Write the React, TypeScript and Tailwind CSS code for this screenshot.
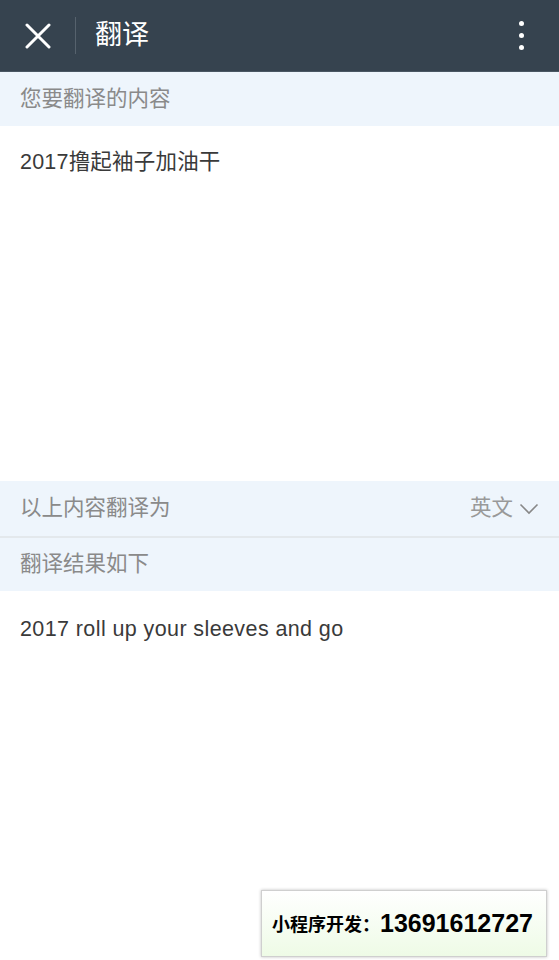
import React from "react";

const font = '"Liberation Sans", "Noto Sans CJK SC", sans-serif';

export default function App() {
  return (
    <div
      className="relative w-[559px] h-[960px] bg-white overflow-hidden"
      style={{ fontFamily: font }}
    >
      <header className="h-[72px] bg-[#36434f] border-b border-[#4a5763] flex items-center">
        <div className="w-[75px] flex items-center justify-center pl-[1px]">
          <svg width="26" height="26" viewBox="0 0 26 26">
            <path d="M2 2 L24 24 M24 2 L2 24" stroke="#fff" strokeWidth="3" strokeLinecap="round" />
          </svg>
        </div>
        <div className="w-px h-[37px] bg-[#56626d]" />
        <div className="pl-[19px] text-white text-[27px] leading-none flex-1">翻译</div>
        <div className="w-[48px] flex flex-col items-center gap-[7px] mr-[14px]">
          <span className="w-[5px] h-[5px] rounded-full bg-white" />
          <span className="w-[5px] h-[5px] rounded-full bg-white" />
          <span className="w-[5px] h-[5px] rounded-full bg-white" />
        </div>
      </header>
      <div className="h-[54px] bg-[#eef5fc] flex items-center px-[20px] text-[21.5px] text-[#8a8a8a]">
        您要翻译的内容
      </div>
      <div className="h-[355px] px-[20px]">
        <div className="pt-[22px] text-[21.5px] tracking-[0.2px] leading-[28px] text-[#3a3a3a]">2017撸起袖子加油干</div>
      </div>
      <div className="h-[55px] bg-[#eef5fc] flex items-center px-[20px] text-[21.5px] text-[#8a8a8a]">
        <span className="flex-1">以上内容翻译为</span>
        <span className="text-[#999] flex items-center gap-[6px]">
          英文
          <svg width="20" height="12" viewBox="0 0 20 12">
            <path d="M1.5 1.5 L10 10 L18.5 1.5" stroke="#888" strokeWidth="1.6" fill="none" />
          </svg>
        </span>
      </div>
      <div className="h-[2px] bg-[#e3e8ec]" />
      <div className="h-[53px] bg-[#eef5fc] flex items-center px-[20px] text-[21.5px] text-[#8a8a8a]">
        翻译结果如下
      </div>
      <div className="px-[20px] pt-[24px] text-[21.5px] tracking-[0.4px] leading-[28px] text-[#3a3a3a]">
        2017 roll up your sleeves and go
      </div>
      <div
        className="absolute left-[261px] top-[890px] w-[286px] h-[67px] border border-[#cfcfcf] shadow-[0_0_3px_rgba(0,0,0,0.25)] bg-gradient-to-b from-white to-[#eefbe6] flex items-center pl-[10px] text-black font-bold"
      >
        <span className="text-[18px]" style={{ fontFamily: '"Noto Sans CJK SC", sans-serif' }}>小程序开发：</span>
        <span className="text-[25px]">13691612727</span>
      </div>
    </div>
  );
}
